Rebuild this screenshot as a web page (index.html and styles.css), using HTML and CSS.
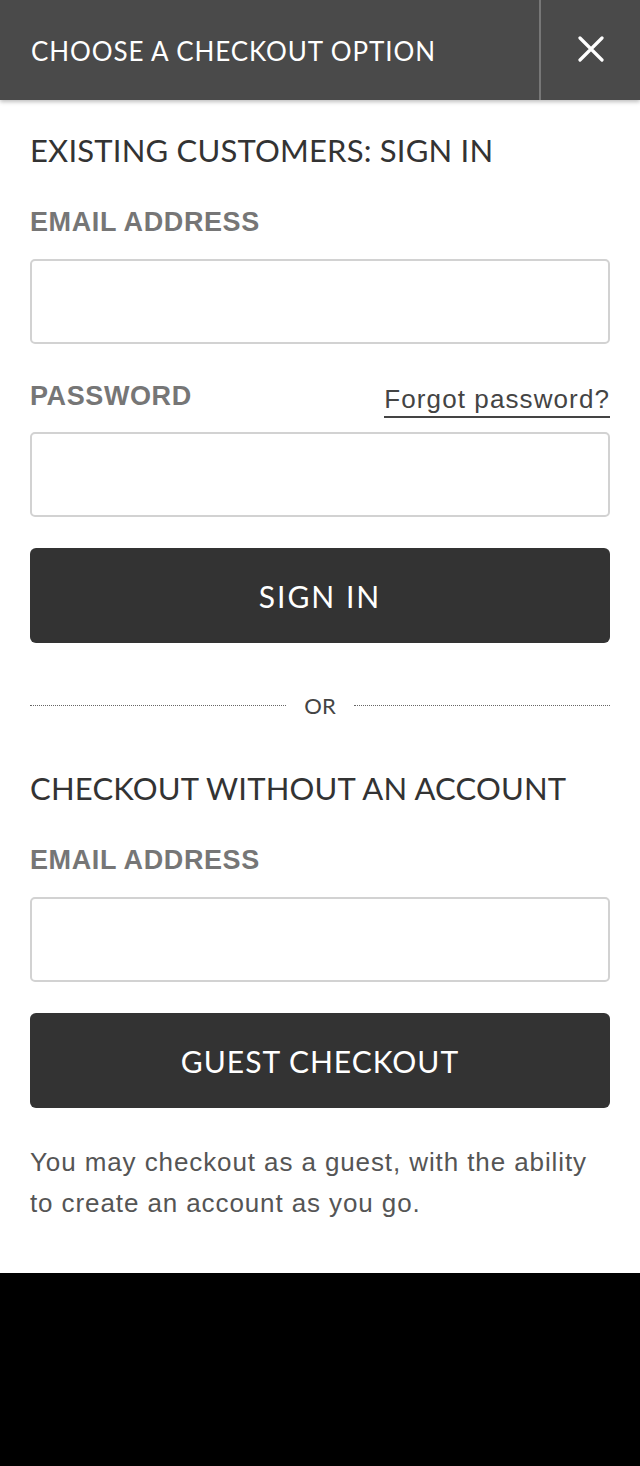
FILE: index.html
```html
<!DOCTYPE html>
<html lang="en">
<head>
  <meta charset="UTF-8" />
  <title>Choose a Checkout Option</title>
  <link rel="stylesheet" href="styles.css">
</head>
<body>

<div class="modal">
  <header class="modal-head">
    <h1>Choose a Checkout Option</h1>
    <button class="close" aria-label="Close">
      <svg width="26" height="26" viewBox="0 0 26 26"><path d="M2 2L24 24M24 2L2 24" stroke="#fff" stroke-width="3.2" stroke-linecap="round" fill="none"/></svg>
    </button>
  </header>

  <div class="modal-body">
    <!-- Existing customers -->
    <h2>Existing Customers: Sign In</h2>
    <label class="field-label" for="email">Email Address</label>
    <input class="field" type="email" id="email">

    <div class="label-row">
      <label class="field-label" for="password">Password</label>
      <a href="#" class="forgot">Forgot password?</a>
    </div>
    <input class="field field-last" type="password" id="password">

    <button class="btn">Sign In</button>

    <div class="divider"><span>OR</span></div>

    <!-- Guest checkout -->
    <h2>Checkout Without An Account</h2>
    <label class="field-label" for="guestEmail">Email Address</label>
    <input class="field field-last" type="email" id="guestEmail">

    <button class="btn btn-guest">Guest Checkout</button>

    <p class="note">You may checkout as a guest, with the ability to create an account as you go.</p>
  </div>
</div>

</body>
</html>
```

FILE: styles.css
```css
body {
  margin: 0;
  background-color: #000;
  font-family: 'Liberation Sans', Arial, sans-serif;
}

.modal {
  background-color: #fff;
}

.modal-head {
  display: flex;
  height: 100px;
  background-color: #4a4a4a;
  box-shadow: 0 2px 4px rgba(0, 0, 0, 0.25);
}

.modal-head h1 {
  flex: 1;
  margin: 0;
  padding-left: 31px;
  line-height: 102px;
  color: #fff;
  font-family: 'Lato', sans-serif;
  font-weight: normal;
  font-size: 26px;
  letter-spacing: 0.9px;
  text-transform: uppercase;
}

.close {
  width: 101px;
  border: none;
  border-left: 2px solid #777;
  background: none;
  display: flex;
  align-items: center;
  justify-content: center;
  padding: 0 0 2px;
}

.modal-body {
  padding: 30px 30px 49px;
}

.modal-body h2 {
  margin: 0 0 36px;
  color: #333;
  font-family: 'Lato', sans-serif;
  font-weight: normal;
  font-size: 31px;
  line-height: 40px;
  letter-spacing: 0.2px;
  text-transform: uppercase;
}

.field-label {
  display: block;
  color: #767676;
  font-weight: bold;
  font-size: 27px;
  line-height: 32px;
  letter-spacing: 0.6px;
  text-transform: uppercase;
}

.label-row {
  display: flex;
  justify-content: space-between;
  align-items: flex-start;
}

.label-row .field-label {
  margin-top: -2px;
}

.forgot {
  color: #444;
  font-size: 26px;
  line-height: 34px;
  letter-spacing: 1.1px;
  text-decoration: none;
  border-bottom: 2px solid #444;
}

.field {
  display: block;
  box-sizing: border-box;
  width: 100%;
  height: 85px;
  margin: 21px 0 38px;
  border: 2px solid #d2d2d2;
  border-radius: 5px;
}

.label-row + .field {
  margin-top: 14px;
}

.field-last {
  margin-bottom: 31px;
}

.btn {
  display: block;
  width: 100%;
  height: 95px;
  border: none;
  border-radius: 6px;
  background-color: #333;
  color: #fff;
  font-family: 'Lato', sans-serif;
  font-size: 30px;
  letter-spacing: 2px;
  text-transform: uppercase;
}

.btn-guest {
  letter-spacing: 1px;
}

.divider {
  display: flex;
  align-items: center;
  gap: 18px;
  margin: 49px 0 49px;
  color: #444;
  font-family: 'Lato', sans-serif;
  font-size: 22px;
}

.divider::before,
.divider::after {
  content: "";
  flex: 1;
  border-top: 1px dotted #666;
}

.note {
  margin: 34px 0 0;
  color: #555;
  font-size: 26px;
  line-height: 41px;
  letter-spacing: 0.9px;
}
```
